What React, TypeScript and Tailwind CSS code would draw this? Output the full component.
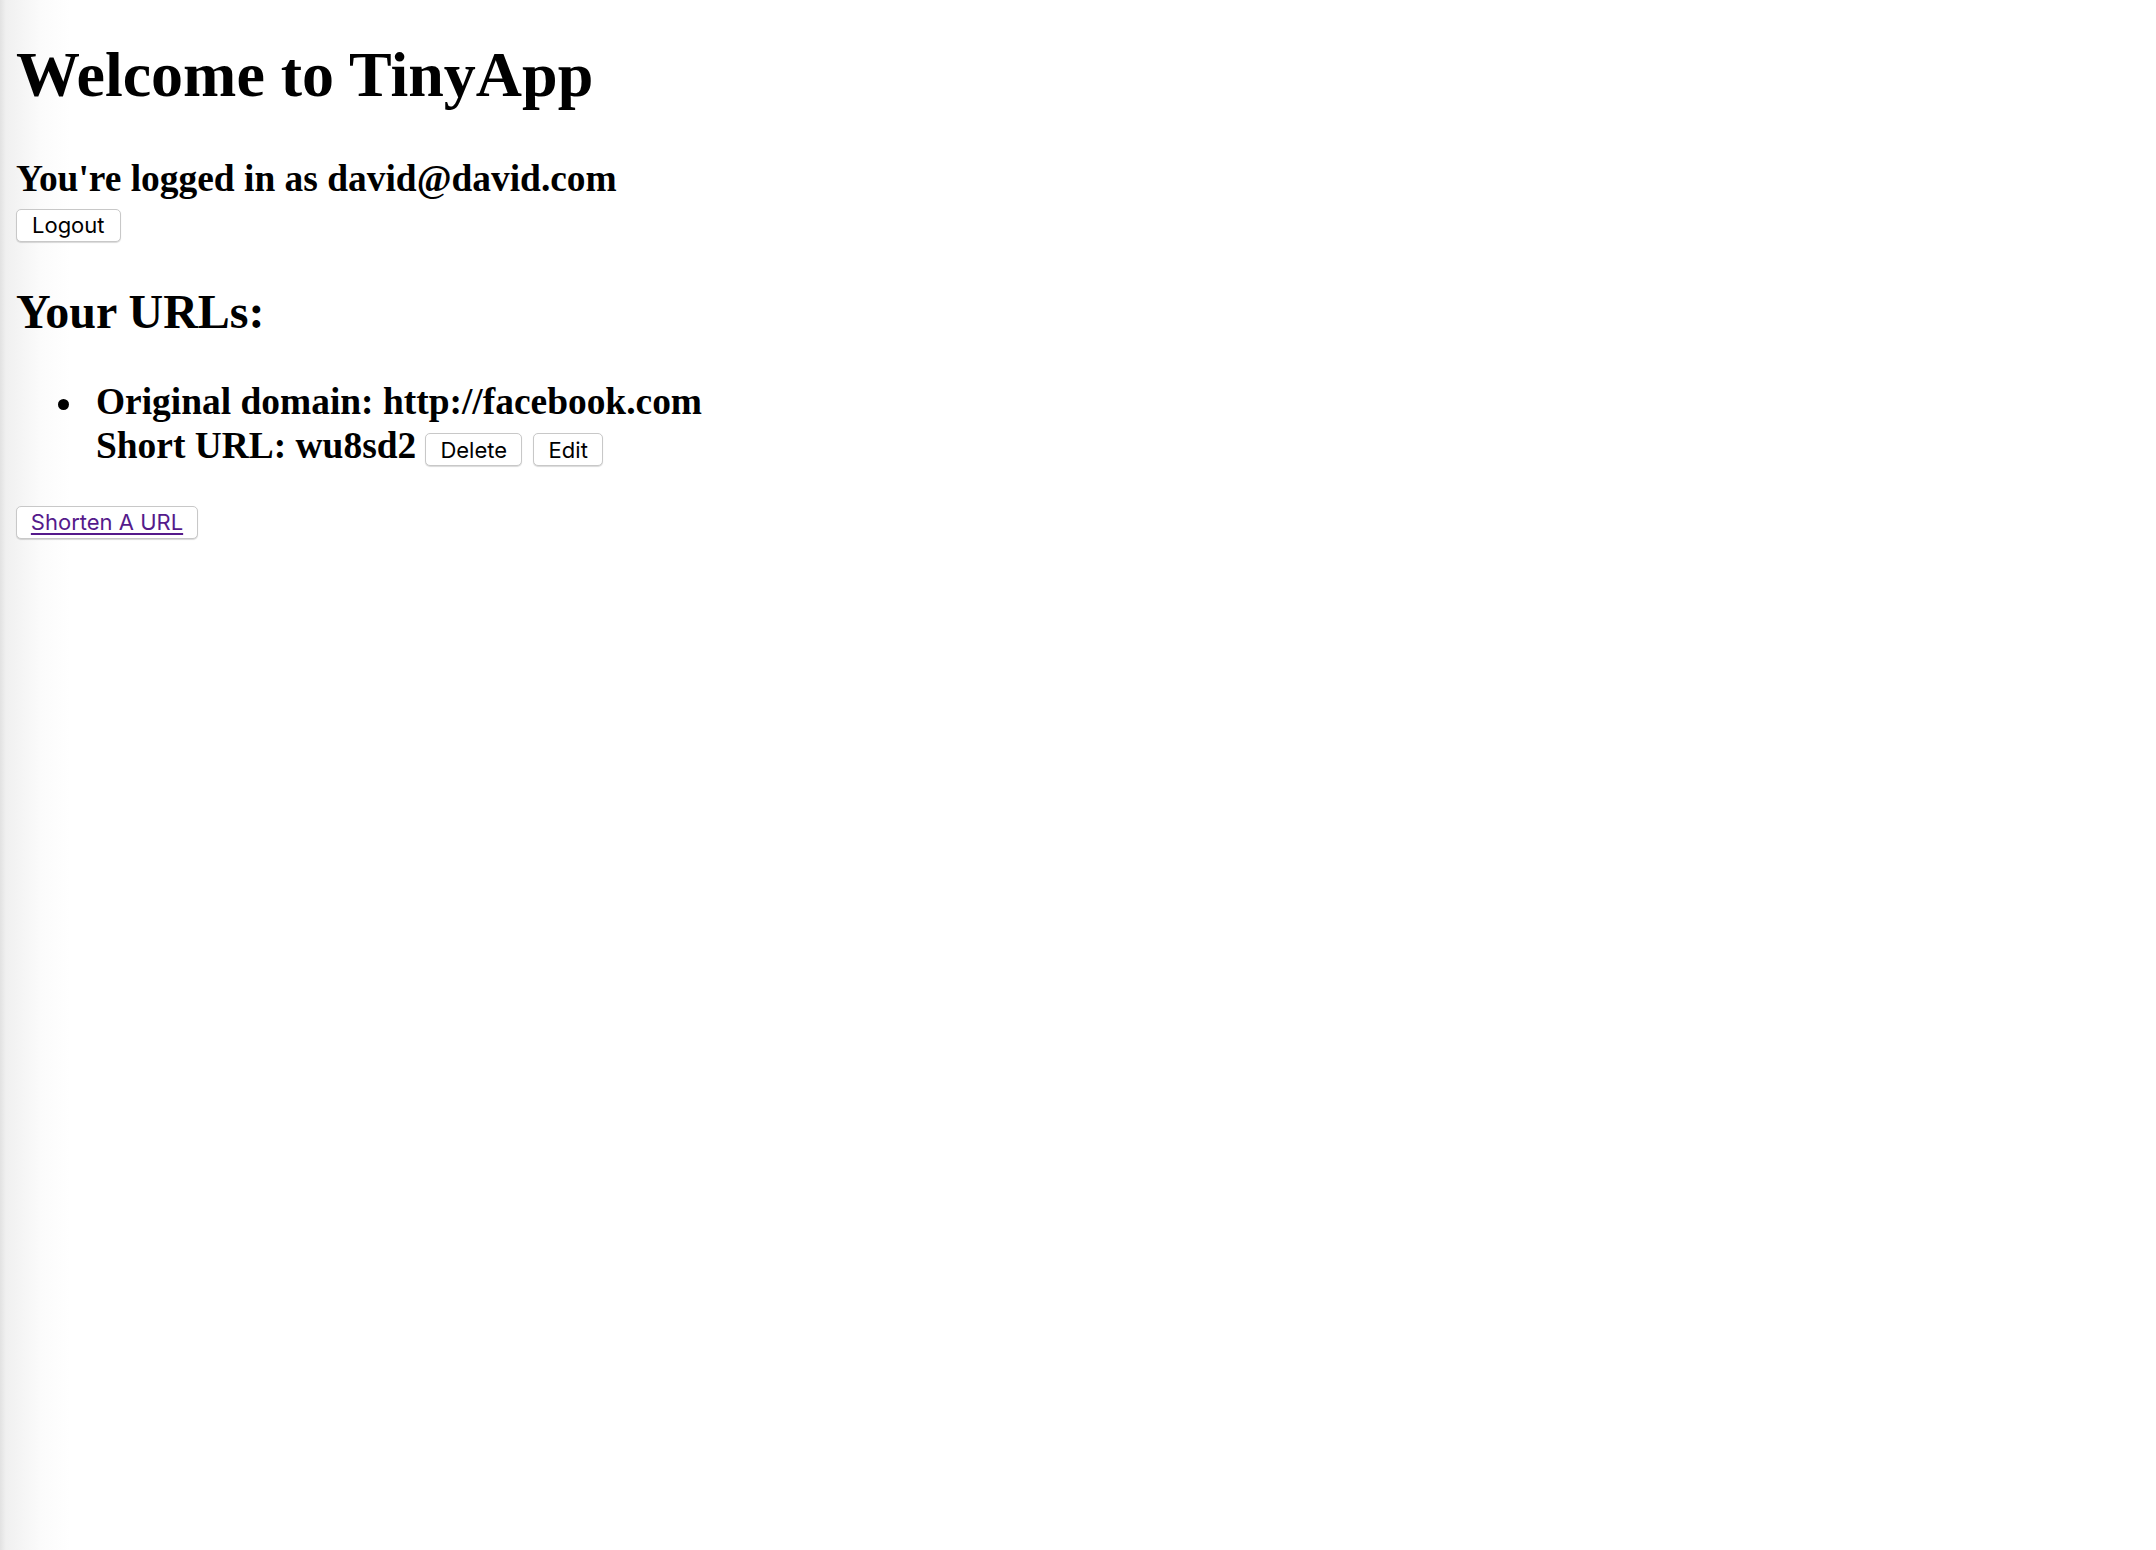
export default function App() {
    const urls = [{ short: "wu8sd2", long: "http://facebook.com" }]

    const btn = "h-[33px] bg-white border border-[#c8c8c8] rounded-[5px] shadow-[0_1px_1px_rgba(0,0,0,0.15)] text-[22px] leading-none font-normal font-['Inter',sans-serif]"

    return (
        <div className="min-h-screen bg-[linear-gradient(to_right,#e2e2e2_0px,#f0f0f0_6px,#fbfbfb_40px,#ffffff_70px)] px-4 pt-[38px] text-black font-['Liberation_Serif',serif]">
            <h1 className="text-[64px] leading-[73.6px] font-bold">Welcome to TinyApp</h1>

            <h3 className="mt-[45px] text-[37.44px] leading-[43px] font-bold">You're logged in as david@david.com</h3>
            <form className="mt-[9px]">
                <button type="button" className={`${btn} px-[15px]`}>
                    Logout
                </button>
            </form>

            <h2 className="mt-[42px] text-[48px] leading-[55.2px] font-bold">Your URLs:</h2>

            <ul className="mt-[41px] pl-[42px]">
                {urls.map((url) => (
                    <li key={url.short} className="flex items-start">
                        <div className="mt-[19px] mr-[27px] h-[11px] w-[11px] shrink-0 rounded-full bg-black" />
                        <div className="text-[37.44px] leading-[44px] font-bold">
                            Original domain: {url.long}
                            <br />
                            Short URL: {url.short}
                            <button type="button" className={`${btn} ml-[9px] w-[97px]`}>
                                Delete
                            </button>
                            <button type="button" className={`${btn} ml-[11px] w-[70px]`}>
                                Edit
                            </button>
                        </div>
                    </li>
                ))}
            </ul>

            <div className="mt-[38px]">
                <button type="button" className={`${btn} w-[182px]`}>
                    <a href="#" className="text-[#551a8b] underline underline-offset-[3px]">Shorten A URL</a>
                </button>
            </div>
        </div>
    )
}
